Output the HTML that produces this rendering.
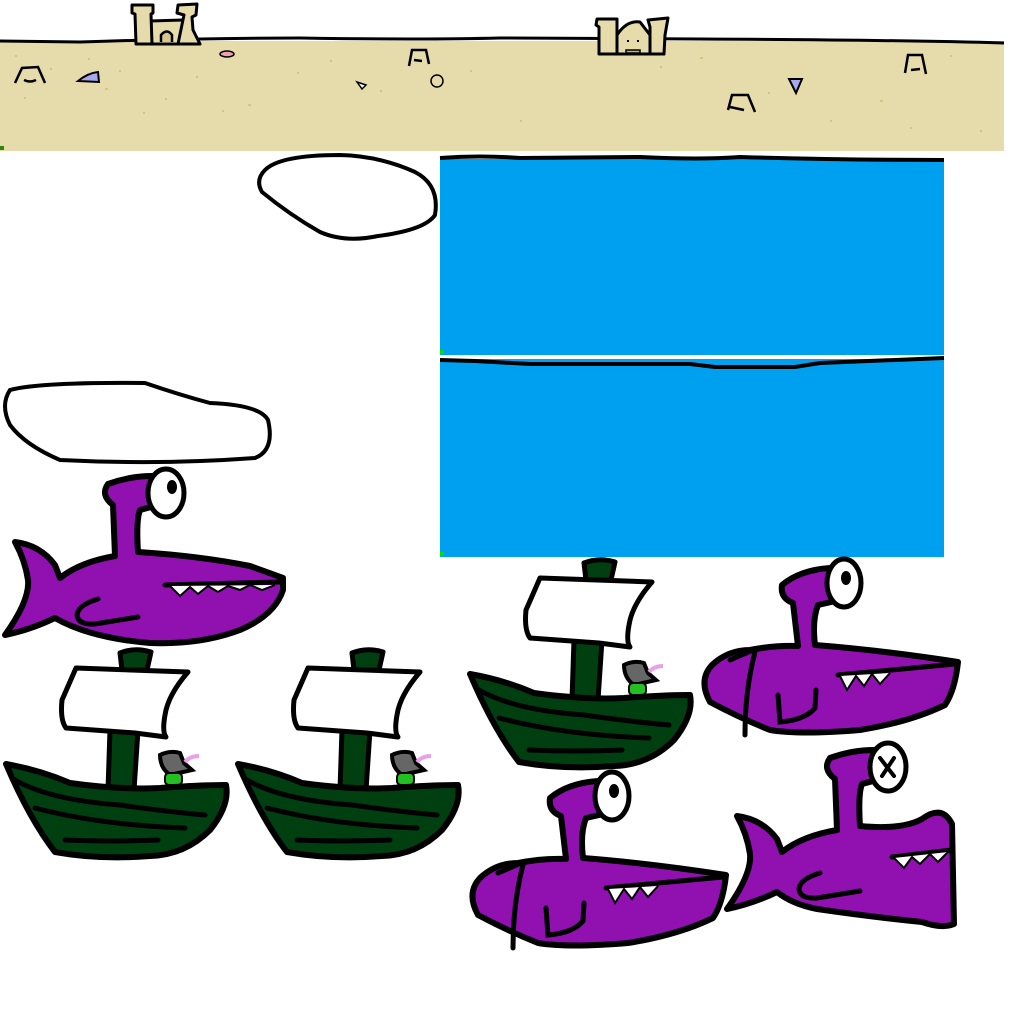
<!DOCTYPE html>
<html><head><meta charset="utf-8"><style>html,body{margin:0;padding:0;background:#fff;width:1024px;height:1024px;overflow:hidden}</style></head>
<body>
<svg width="1024" height="1024" viewBox="0 0 1024 1024" xmlns="http://www.w3.org/2000/svg">
<defs>
<g id="boat">
  <path d="M120,653 Q135,647 151,652 L147,670 L122,670 Z" fill="#004010" stroke="#000" stroke-width="5" stroke-linejoin="round"/>
  <path d="M110,730 L138,730 L134,790 L108,790 Z" fill="#004010" stroke="#000" stroke-width="5"/>
  <path d="M76,668 L188,672 Q168,695 165,715 Q162,732 166,737 L135,733 L66,728 Q60,720 62,700 Z" fill="#fff" stroke="#000" stroke-width="5" stroke-linejoin="round"/>
  <path d="M160,755 Q170,750 180,753 L184,763 L192,770 L170,775 Q160,768 160,755 Z" fill="#666" stroke="#000" stroke-width="4"/>
  <path d="M185,762 Q190,756 199,756" fill="none" stroke="#e8a0e8" stroke-width="4"/>
  <rect x="165" y="773" width="17" height="12" rx="4" fill="#22c022" stroke="#000" stroke-width="2"/>
  <path d="M6,764 Q40,770 70,783 Q120,790 160,788 Q200,785 226,785 Q230,805 210,830 Q185,855 150,856 Q100,860 55,852 Q30,820 6,764 Z" fill="#004010" stroke="#000" stroke-width="6" stroke-linejoin="round"/>
  <path d="M15,780 Q50,800 120,805 Q170,812 205,815 M35,808 Q100,825 185,828 M65,840 Q110,842 158,840" fill="none" stroke="#000" stroke-width="5" stroke-linecap="round"/>
</g>
<g id="shark1">
  <path d="M15,542 Q40,545 55,565 L60,578 Q80,562 115,556 L113,505 Q100,495 108,484 Q130,476 152,476 L160,505 Q150,507 140,510 Q136,520 138,552 Q200,556 250,566 L283,578 L283,590 Q275,615 240,630 Q200,645 150,643 Q90,638 55,618 Q30,630 5,635 Q30,600 28,580 Q25,560 15,542 Z" fill="#9010b0" stroke="#000" stroke-width="6" stroke-linejoin="round"/>
  <ellipse cx="166" cy="493" rx="18" ry="24" fill="#fff" stroke="#000" stroke-width="5"/>
  <ellipse cx="172" cy="487" rx="5" ry="7" fill="#000"/>
  <path d="M165,585 L280,582 M98,599 Q78,605 77,615 Q78,625 95,624 L138,617" fill="none" stroke="#000" stroke-width="5" stroke-linecap="round"/>
  <path d="M170,586 L180,596 L190,587 L198,594 L208,586 L218,592 L228,586 L240,590 L250,585 L262,590 L275,585" fill="#fff" stroke="#000" stroke-width="2"/>
</g>
<g id="shark2">
  <path d="M750,650 Q775,645 798,646 L793,603 Q780,598 782,585 Q800,570 830,568 L840,600 L818,605 Q812,620 815,645 Q880,650 958,662 Q955,690 945,705 Q910,722 860,730 Q800,735 770,730 Q740,718 710,702 Q698,680 712,665 Q728,650 750,650 Z" fill="#9010b0" stroke="#000" stroke-width="6" stroke-linejoin="round"/>
  <ellipse cx="844" cy="583" rx="17" ry="24" fill="#fff" stroke="#000" stroke-width="5"/>
  <ellipse cx="846" cy="578" rx="5" ry="7" fill="#000"/>
  <path d="M755,652 Q745,690 745,735 M838,675 L955,664 M778,695 L780,722 Q805,720 815,708 L816,690 M730,660 L758,648" fill="none" stroke="#000" stroke-width="5" stroke-linecap="round"/>
  <path d="M840,676 L847,690 L856,676 L864,686 L872,674 L880,684 L890,673" fill="#fff" stroke="#000" stroke-width="2"/>
</g>
</defs>

<!-- beach -->
<rect x="0" y="41" width="1004" height="110" fill="#e6dbab"/>
<path d="M0,41 L80,42 Q200,38 300,38 Q420,40 500,38 L700,39 Q900,40 1004,43" fill="none" stroke="#000" stroke-width="3"/>
<rect x="0" y="146" width="4" height="4" fill="#2a8a00"/>
<g fill="#e6dbab" stroke="#000" stroke-width="3" stroke-linejoin="round">
  <path d="M150,44 L150,21 L183,20 L183,44 Z"/>
  <path d="M136,44 L135,14 L132,13 L132,5 L153,5 L153,13 L151,14 L152,44 Z"/>
  <path d="M178,44 L184,15 L177,13 L178,5 L197,4 L196,15 L192,17 L193,30 L200,44 Z"/>
  <path d="M599,54 L599,27 L596,25 L597,19 L617,19 L617,54 Z"/>
  <path d="M617,54 L617,35 Q627,20 640,22 L650,35 L650,54 Z"/>
  <path d="M650,54 L650,27 L648,20 L668,18 L665,35 L664,54 Z"/>
</g>
<path d="M161,42 L161,35 Q167,28 172,35 L172,42" fill="#d8c890" stroke="#000" stroke-width="2.5"/>
<path d="M626,50 L640,50 L640,53 L626,53 Z" fill="#c8b070" stroke="#000" stroke-width="1.5"/>
<rect x="627" y="40" width="2" height="2" fill="#000"/><rect x="637" y="40" width="2" height="2" fill="#000"/>
<path d="M15,83 L22,68 L38,67 L45,83 M24,80 Q30,83 36,80" fill="none" stroke="#000" stroke-width="2.5"/>
<path d="M78,81 Q88,73 98,72 L99,82 Z" fill="#a8a8f0" stroke="#000" stroke-width="2"/>
<ellipse cx="227" cy="54" rx="7" ry="3" fill="#f0a0b0" stroke="#000" stroke-width="1.5"/>
<path d="M409,66 L412,50 L426,50 L429,64 M414,60 L422,61" fill="none" stroke="#000" stroke-width="2.5"/>
<circle cx="437" cy="81" r="6" fill="none" stroke="#000" stroke-width="1.5"/>
<path d="M357,82 L366,85 L362,89 Z" fill="#fff" stroke="#000" stroke-width="1.5"/>
<path d="M728,110 L732,95 L748,95 L755,112 M730,107 L744,110" fill="none" stroke="#000" stroke-width="2.5"/>
<path d="M789,79 L802,79 L796,93 Z" fill="#a8a8f0" stroke="#000" stroke-width="2"/>
<path d="M905,73 L908,55 L922,55 L926,74 M911,70 L920,69" fill="none" stroke="#000" stroke-width="2.5"/>
<g fill="#d6c47c">
<rect x="15" y="55" width="2" height="2"/><rect x="88" y="58" width="2" height="2"/><rect x="50" y="68" width="2" height="2"/><rect x="119" y="70" width="2" height="2"/><rect x="105" y="88" width="3" height="2"/><rect x="24" y="97" width="2" height="2"/><rect x="143" y="112" width="2" height="2"/><rect x="248" y="104" width="3" height="2"/><rect x="196" y="76" width="2" height="2"/><rect x="165" y="98" width="2" height="2"/><rect x="297" y="72" width="2" height="2"/><rect x="222" y="110" width="2" height="2"/><rect x="330" y="60" width="2" height="2"/><rect x="380" y="90" width="2" height="2"/><rect x="470" y="70" width="2" height="2"/><rect x="520" y="120" width="2" height="2"/><rect x="660" y="66" width="2" height="2"/><rect x="700" y="57" width="3" height="2"/><rect x="880" y="100" width="3" height="2"/><rect x="950" y="55" width="2" height="2"/><rect x="980" y="130" width="2" height="2"/><rect x="830" y="120" width="2" height="2"/><rect x="910" y="127" width="2" height="2"/><rect x="768" y="92" width="2" height="2"/>
</g>

<!-- clouds -->
<path d="M265,170 Q280,155 340,155 Q380,156 415,172 Q440,185 435,215 Q425,230 378,236 Q345,243 320,232 Q290,215 262,192 Q255,180 265,170 Z" fill="#fff" stroke="#000" stroke-width="4"/>
<path d="M10,390 Q40,382 145,383 Q180,395 210,403 Q260,405 268,420 Q275,450 255,458 Q160,465 60,460 Q25,445 10,425 Q0,405 10,390 Z" fill="#fff" stroke="#000" stroke-width="4"/>

<!-- water -->
<rect x="440" y="159" width="504" height="196" fill="#00a0f0"/>
<path d="M440,158 Q480,155 520,158 L640,157 Q700,160 740,157 Q840,160 944,160" fill="none" stroke="#000" stroke-width="4"/>
<rect x="440" y="359" width="504" height="198" fill="#00a0f0"/>
<path d="M440,360 L475,361 L530,364 L690,364 L715,367 L795,367 L820,363 L944,358" fill="none" stroke="#000" stroke-width="4"/>
<rect x="440" y="350" width="4" height="4" fill="#00e000"/>
<rect x="440" y="552" width="4" height="4" fill="#00e000"/>

<!-- boats -->
<use href="#boat"/>
<use href="#boat" transform="translate(232,0)"/>
<use href="#boat" transform="translate(464,-90)"/>

<!-- sharks -->
<use href="#shark1"/>
<use href="#shark2"/>
<use href="#shark2" transform="translate(-232,213)"/>
<g transform="translate(722,274)">
  <path d="M15,542 Q40,545 55,565 L60,578 Q80,562 115,556 L113,505 Q100,495 108,484 Q130,476 152,476 L160,505 Q150,507 140,510 Q136,520 138,552 Q180,556 200,545 Q220,530 230,550 L232,650 Q220,655 200,648 Q150,643 95,635 Q70,630 55,618 Q30,630 5,635 Q30,600 28,580 Q25,560 15,542 Z" fill="#9010b0" stroke="#000" stroke-width="6" stroke-linejoin="round"/>
  <ellipse cx="166" cy="493" rx="18" ry="24" fill="#fff" stroke="#000" stroke-width="5"/>
  <path d="M158,484 L172,502 M172,484 L160,502" stroke="#000" stroke-width="4" stroke-linecap="round"/>
  <path d="M170,583 L230,576 M98,599 Q78,605 77,615 Q78,625 95,624 L138,617" fill="none" stroke="#000" stroke-width="5" stroke-linecap="round"/>
  <path d="M172,584 L182,594 L190,583 L198,590 L208,580 L216,588 L226,578" fill="#fff" stroke="#000" stroke-width="2"/>
</g>
</svg>
</body></html>
